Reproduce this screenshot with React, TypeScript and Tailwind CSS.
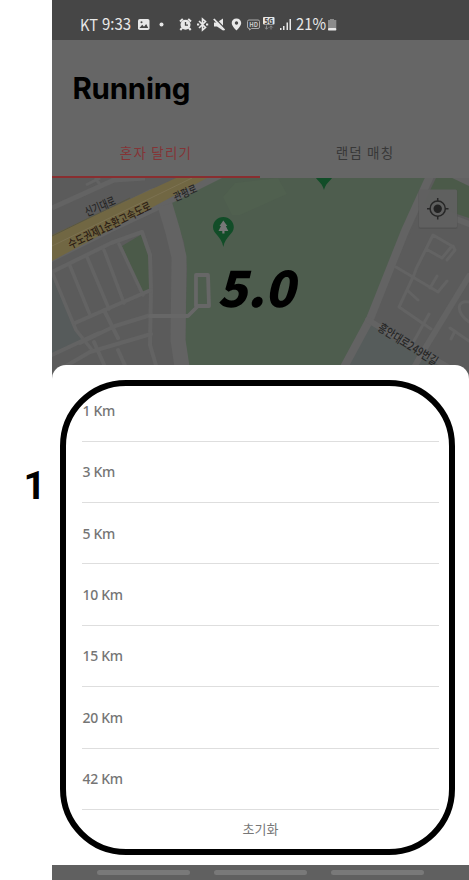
import React from "react";

const distances = ["1 Km", "3 Km", "5 Km", "10 Km", "15 Km", "20 Km", "42 Km"];
const korean = "font-['Noto_Sans_CJK_KR',sans-serif]";

function StatusBar() {
  return (
    <div className="h-10 shrink-0 bg-[#464646]">
      <svg viewBox="52 0 417 40" className="block h-10 w-[417px]" fill="#e8e8e8">
        <g fontFamily="'Noto Sans CJK KR', sans-serif" fontSize="16">
          <text x="80" y="30.500" fontSize="15.500" textLength="18" lengthAdjust="spacingAndGlyphs">KT</text>
          <text x="102" y="30" textLength="29" lengthAdjust="spacingAndGlyphs">9:33</text>
          <text x="296" y="30" textLength="30" lengthAdjust="spacingAndGlyphs">21%</text>
        </g>
        <rect x="138" y="19" width="11.500" height="11" rx="1.800" />
        <path d="M139.500 28 L142.200 24.800 L144 26.700 L146.200 24 L148.200 28Z" fill="#464646" />
        <circle cx="141.500" cy="22.300" r="1" fill="#464646" />
        <circle cx="161.500" cy="24.500" r="2" />
        <circle cx="185.500" cy="24.700" r="5" />
        <g fill="none" stroke="#e8e8e8">
          <path d="M180 21.500 L182.800 19 M191 21.500 L188.200 19 M182 28 L180.300 30 M189 28 L190.700 30" strokeWidth="2" />
          <path d="M185.500 22 V25.200 H188" strokeWidth="1.300" stroke="#464646" />
          <path d="M199 21 L205.500 27.500 L202.500 30 V19 L205.500 21.500 L199 28" strokeWidth="1.600" />
          <path d="M197 24.500 h2.200 M206 24.500 h2.200" strokeWidth="2" />
        </g>
        <path d="M214 22.500 H217 L223 18.500 V30.500 L217 26.500 H214Z" />
        <path d="M214.800 18 L225.500 29.200" stroke="#464646" strokeWidth="1.400" />
        <path d="M213.800 19 L224.500 30.200" stroke="#e8e8e8" strokeWidth="1.800" />
        <path fillRule="evenodd" d="M236.500 18.500 C233.700 18.500 231.700 20.500 231.700 23 C231.700 26 236.500 30.500 236.500 30.500 C236.500 30.500 241.200 26 241.200 23 C241.200 20.500 239.200 18.500 236.500 18.500Z M236.500 21.300 A1.700 1.700 0 1 1 236.490 21.300Z" />
        <path d="M249 20 H258 Q259.500 20 259.500 21.500 V27 Q259.500 28.500 258 28.500 H251.500 L249.500 30 V28.500 Q247.500 28.500 247.500 27 V21.500 Q247.500 20 249 20Z" fill="none" stroke="#aaa" strokeWidth="1" />
        <text x="249.200" y="27.300" fontSize="7.500" fontWeight="700" fontFamily="'Open Sans', sans-serif" fill="#c5c5c5" textLength="8.800" lengthAdjust="spacingAndGlyphs">HD</text>
        <rect x="263" y="17" width="11.500" height="7.500" rx="1" />
        <text x="264.500" y="23.700" fontSize="8" fontWeight="700" fontFamily="'Open Sans', sans-serif" fill="#464646" textLength="8.600" lengthAdjust="spacingAndGlyphs">5G</text>
        <path d="M266.500 25.500 V29 M264.800 27.500 L266.500 29.200 L268.200 27.500 M271 29.500 V26 M269.300 27.500 L271 25.800 L272.700 27.500" fill="none" stroke="#8a8a8a" />
        <path d="M280 28h1.500v2H280z M283 26h1.500v4H283z M286.500 22.500H288V30h-1.500z M289.500 19H291v11h-1.500z" />
        <path d="M330 19 H334 V20 H336.300 V28 H328 V20 H330Z" fill="#8b8b8b" />
        <rect x="328" y="28" width="8.300" height="2.500" rx=".7" />
      </svg>
    </div>
  );
}

function MapView() {
  return (
    <div className="relative h-[202px] w-full shrink-0 overflow-hidden bg-[#5b5b5b]">
      <svg viewBox="52 178 417 202" className="block h-[202px] w-[417px]">
        <g fill="none" stroke="#636363" strokeWidth="4">
          <path d="M86 185 L100 178 M95 178 L102 187" strokeWidth="3" />
          <path d="M52 208 L114 180 L145 178" strokeWidth="5" />
        </g>
        <path d="M52 239 L150 189 L190 178 L225 178 L172 204 L110 233 L52 262Z" fill="#636363" />
        <path d="M52 277 L54 281 L75 328 L84 342 L52 357Z" fill="#565b5b" />
        <path d="M122 246 L142 234 L150 257 L149 290 L142 292Z" fill="#4b5a49" />
        <path d="M172 203 L222 178 H427 L404 226 L369 321 L335 380 H192 L185 350 L187 268 L184 242 L172 210Z" fill="#4e5d4e" />
        <path d="M223 197 L235 183 L278 178 L287 194 L240 215 H232Z" fill="#50604f" />
        <g fill="none" stroke="#636363" strokeLinejoin="round" strokeLinecap="round">
          <path d="M52 272 L111 243 L142 232 L150 255 L151 290 L150 345 L158 372" strokeWidth="4" />
          <path d="M165 205 L173 232 L179 257 L178 340 L184 380" strokeWidth="15" strokeLinecap="butt" />
          <path d="M52 272 L76 330 L92 350 M70 266 L90 315 M87 257 L109 309 M104 250 L124 303 M119 244 L143 295" strokeWidth="3.500" />
          <path d="M75 323 L107 309 L151 290 M80 343 L115 326 L151 315 M52 355 L99 333 M52 374 L90 352 L151 334 M104 310 L118 338 M94 342 L110 378 M118 350 L127 370" strokeWidth="4" />
          <path d="M150 316 H188 L198 306 M196 275 H208 L209 306 H196Z" strokeWidth="3.800" stroke="#676767" />
        </g>
        <path d="M52 235 L176 178 H207 L52 261Z" fill="#716743" />
        <path d="M52 246 L192 178" stroke="#7c7252" strokeWidth="1" />
        <path d="M52 236 L130 198" stroke="#595743" strokeWidth="1" />
        <path d="M433 178 L469 178 V380 H338 L369 321 L410 234Z" fill="#5b5b5b" />
        <path d="M436 178 H469 V218 L424 203Z" fill="#4b5a49" />
        <path d="M448 176 L469 186 V178Z" fill="#626262" />
        <path d="M369 323 L391 339 L451 368 L455 380 H340Z" fill="#565c5b" />
        <g fill="none" stroke="#636363" strokeLinecap="round" strokeLinejoin="round">
          <path d="M430 176 L405 231 L370 319 L336 382" strokeWidth="8" />
          <path d="M368 320 L388 332 L458 373 M422 206 L469 224 M469 276 L424 350 L412 371" strokeWidth="6" />
          <path d="M396 267 L438 292 L447 281 M433 235 L452 246 L442 258 L426 249Z M433 235 L416 269 L414 275 L399 307 L431 329 M437 276 L430 288 M407 290 L418 300 M429 314 L414 341 M453 246 L455 250 L447 260" strokeWidth="3" />
          <path d="M469 302 C455 300 457 313 469 322 M450 328 L469 341 M455 331 L451 339" strokeWidth="3" />
        </g>
        <g fontFamily="'Noto Sans CJK KR', sans-serif" fill="#262626" fontWeight="500">
          <text transform="translate(87 216.500) rotate(-23)" fontSize="11.500" textLength="32" lengthAdjust="spacingAndGlyphs">신기대로</text>
          <text transform="translate(175.500 201.500) rotate(-24)" fontSize="11" textLength="24.500" lengthAdjust="spacingAndGlyphs">관평로</text>
          <text transform="translate(70.500 249) rotate(-26)" fontSize="11.800" fill="#2d2015" textLength="91" lengthAdjust="spacingAndGlyphs">수도권제1순환고속도로</text>
          <text transform="translate(377 330) rotate(32)" fontSize="12" textLength="68" lengthAdjust="spacingAndGlyphs">흥안대로249번길</text>
        </g>
        <path d="M223.300 217 C217.500 217 213 221.500 213 227.200 C213 234 221.500 236 223.300 247 C225.500 236 233.800 234 233.800 227.200 C233.800 221.500 229 217 223.300 217Z" fill="#124d28" />
        <path d="M223.300 220.500 L219.500 226 H221 L218.500 231 H222.300 V233.500 H224.500 V231 H228.300 L225.800 226 H227.300Z" fill="#777" />
        <path d="M316 178 H332 C329 182 325.500 184 324 190 C322.500 184 319 182 316 178Z" fill="#124d28" />
        <rect x="418.500" y="190" width="39" height="39" rx="2" fill="#4c4c4c" opacity=".5" />
        <rect x="419" y="189.500" width="38" height="38" rx="1.500" fill="#616161" opacity=".94" />
        <g fill="none" stroke="#272727" strokeWidth="1.500">
          <circle cx="437.700" cy="208.700" r="7.600" />
          <path d="M437.700 198 v3.500 M437.700 216 v3.500 M427 208.700 h3.500 M445 208.700 h3.500" />
        </g>
        <circle cx="437.700" cy="208.700" r="4.200" fill="#222" />
      </svg>
      <div className="absolute left-[170px] top-[72px] -skew-x-[13deg] font-['Noto_Sans_CJK_KR',sans-serif] text-[50px] font-black leading-[70px] tracking-[-0.2px] text-black">5.0</div>
    </div>
  );
}

export default function App() {
  return (
    <main className={`relative h-[880px] w-[469px] overflow-hidden bg-white pl-[52px] ${korean}`}>
      <div className="flex h-full w-[417px] flex-col bg-[#666]">
        <StatusBar />
        <header className="flex h-[138px] shrink-0 flex-col">
          <h1 className="pl-[20.5px] pt-[29px] font-['Inter',sans-serif] text-[29.5px] font-bold leading-[38px] tracking-[-0.25px] text-black">Running</h1>
          <div className="mt-auto flex h-[49px] text-center text-[13.5px] leading-[47px] tracking-[1.2px]">
            <div className="w-[208px] border-b-2 border-[#892e30] text-[#843436]">혼자 달리기</div>
            <div className="w-[209px] pl-px text-[#383838]">랜덤 매칭</div>
          </div>
        </header>
        <MapView />
        <section className="relative -mt-[15px] h-[500px] shrink-0 rounded-t-[14px] bg-white pl-[30px] pr-[30px] pt-[15.2px]">
          {distances.map((distance) => (
            <div key={distance} className="flex h-[61.4px] items-center border-b border-[#dedede] pl-[0.5px] font-['Noto_Sans',sans-serif] text-[14px] font-medium tracking-[-0.3px] text-[#757575]">
              {distance}
            </div>
          ))}
          <button className="block h-[38px] w-full text-center text-[13px] text-[#777]">초기화</button>
        </section>
        <nav className="flex h-[15px] shrink-0 justify-center gap-[24px] bg-[#606060] pt-[5px]">
          <span className="h-[5px] w-[93px] rounded-full bg-[#797979]" />
          <span className="h-[5px] w-[93px] rounded-full bg-[#797979]" />
          <span className="h-[5px] w-[93px] rounded-full bg-[#797979]" />
        </nav>
      </div>
      <div className="pointer-events-none absolute left-[60px] top-[380px] h-[475px] w-[395px] rounded-[66px] border-[6px] border-black" />
      <div className="absolute left-[23.5px] top-[460px] font-['Roboto',sans-serif] text-[39px] font-bold leading-[52px] text-black">1</div>
    </main>
  );
}
